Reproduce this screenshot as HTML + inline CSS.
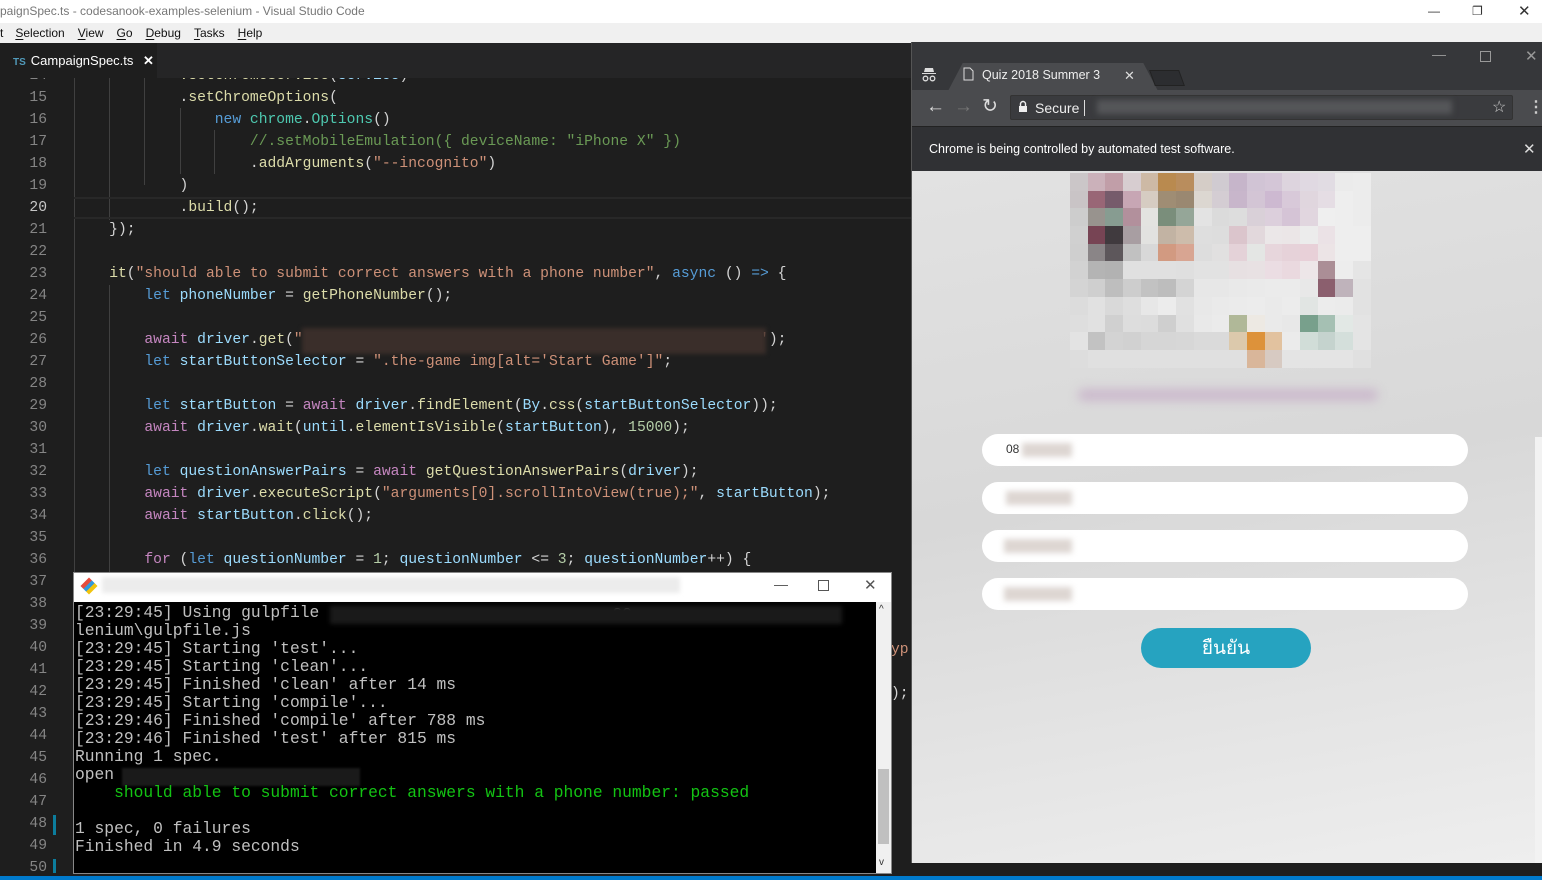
<!DOCTYPE html>
<html><head><meta charset="utf-8"><style>
*{margin:0;padding:0;box-sizing:border-box}
body{width:1542px;height:880px;overflow:hidden;background:#1e1e1e;position:relative;font-family:"Liberation Sans",sans-serif}
.abs{position:absolute}
#title{left:0;top:0;width:1542px;height:23px;background:#fff;color:#777;font-size:12px;line-height:23px;padding-left:0}
#menu{left:0;top:23px;width:1542px;height:20px;background:#f0f0f0;font-size:12px;line-height:20px;color:#111}
#menu span{margin-right:13px}
#menu u{text-decoration-thickness:1px;text-underline-offset:2px}
#tabs{left:0;top:43px;width:912px;height:35px;background:#252526}
#tab{left:0;top:0;width:157px;height:35px;background:#1e1e1e;color:#fff;font-size:13px;line-height:35px;padding-left:13px}
#editor{left:0;top:78px;width:912px;height:795px;overflow:hidden}
.ln{position:absolute;left:0;width:47px;text-align:right;color:#858585;font-family:"Liberation Mono",monospace;font-size:14.67px;height:22px;line-height:22px}
.cl{position:absolute;left:74px;white-space:pre;font-family:"Liberation Mono",monospace;font-size:14.67px;height:22px;line-height:22px;color:#d4d4d4}
.k{color:#569cd6}.v{color:#9cdcfe}.f{color:#dcdcaa}.s{color:#ce9178}.c{color:#6a9955}.p{color:#c586c0}.n{color:#b5cea8}
#term{left:73px;top:572px;width:819px;height:302px;background:#000;border:1px solid #888}
#ttitle{left:0;top:0;width:817px;height:29px;background:#fff}
.tl{position:absolute;left:1px;white-space:pre;font-family:"Liberation Mono",monospace;font-size:16.3px;line-height:18px;height:18px;color:#c0c0c0}
#br{left:911px;top:42px;width:631px;height:821px;background:#dcdcdc;border-left:1px solid #555;overflow:hidden}
.inp{position:absolute;left:70px;width:486px;height:32px;background:#fff;border-radius:16px}
.blur{position:absolute;background:#ddd6d2;filter:blur(3px)}
</style></head><body>
<div id="title" class="abs">paignSpec.ts - codesanook-examples-selenium - Visual Studio Code
<span style="position:absolute;left:1428px;color:#333">&#8212;</span><span style="position:absolute;left:1472px;color:#333">&#10064;</span><span style="position:absolute;left:1518px;color:#333;font-size:15px">&#10005;</span></div>
<div id="menu" class="abs"><span style="margin-right:12px">t</span><span><u>S</u>election</span><span><u>V</u>iew</span><span><u>G</u>o</span><span><u>D</u>ebug</span><span><u>T</u>asks</span><span><u>H</u>elp</span></div>
<div id="tabs" class="abs"><div id="tab" class="abs"><span style="color:#519aba;font-size:10px;font-weight:bold;margin-right:5px">TS</span>CampaignSpec.ts <span style="margin-left:6px;font-weight:bold">✕</span></div></div>
<div id="editor" class="abs"><div class="abs" style="left:0;top:2px;width:912px;height:800px">
<div class="abs" style="left:74px;top:-5px;width:1px;height:800px;background:#404040"></div>
<div class="abs" style="left:109px;top:-5px;width:1px;height:145px;background:#404040"></div>
<div class="abs" style="left:144px;top:-5px;width:1px;height:110px;background:#404040"></div>
<div class="abs" style="left:109px;top:205px;width:1px;height:600px;background:#404040"></div>
<div class="abs" style="left:180px;top:28px;width:1px;height:66px;background:#404040"></div>
<div class="abs" style="left:214px;top:50px;width:1px;height:44px;background:#404040"></div>
<div class="abs" style="left:74px;top:117px;width:838px;height:22px;border-top:2px solid #282828;border-bottom:2px solid #282828"></div>
<div class="ln" style="top:-15px">14</div><div class="cl" style="top:-15px">            <span class="f">.setChromeService</span>(<span class="v">service</span>)</div>
<div class="ln" style="top:7px">15</div><div class="cl" style="top:7px">            .<span class="f">setChromeOptions</span>(</div>
<div class="ln" style="top:29px">16</div><div class="cl" style="top:29px">                <span class="k">new</span> <span style="color:#4ec9b0">chrome</span>.<span style="color:#4ec9b0">Options</span>()</div>
<div class="ln" style="top:51px">17</div><div class="cl" style="top:51px">                    <span class="c">//.setMobileEmulation({ deviceName: "iPhone X" })</span></div>
<div class="ln" style="top:73px">18</div><div class="cl" style="top:73px">                    .<span class="f">addArguments</span>(<span class="s">"--incognito"</span>)</div>
<div class="ln" style="top:95px">19</div><div class="cl" style="top:95px">            )</div>
<div class="ln" style="top:117px;color:#c6c6c6">20</div><div class="cl" style="top:117px">            .<span class="f">build</span>();</div>
<div class="ln" style="top:139px">21</div><div class="cl" style="top:139px">    });</div>
<div class="ln" style="top:161px">22</div>
<div class="ln" style="top:183px">23</div><div class="cl" style="top:183px">    <span class="f">it</span>(<span class="s">"should able to submit correct answers with a phone number"</span>, <span class="k">async</span> () <span class="k">=&gt;</span> {</div>
<div class="ln" style="top:205px">24</div><div class="cl" style="top:205px">        <span class="k">let</span> <span class="v">phoneNumber</span> = <span class="f">getPhoneNumber</span>();</div>
<div class="ln" style="top:227px">25</div>
<div class="ln" style="top:249px">26</div><div class="cl" style="top:249px">        <span class="p">await</span> <span class="v">driver</span>.<span class="f">get</span>(<span class="s">"</span>                                                    <span class="s">'</span>);</div>
<div class="abs" style="left:302px;top:248px;width:464px;height:26px;background:#3a2e2a;filter:blur(2px)"></div>
<div class="ln" style="top:271px">27</div><div class="cl" style="top:271px">        <span class="k">let</span> <span class="v">startButtonSelector</span> = <span class="s">".the-game img[alt='Start Game']"</span>;</div>
<div class="ln" style="top:293px">28</div>
<div class="ln" style="top:315px">29</div><div class="cl" style="top:315px">        <span class="k">let</span> <span class="v">startButton</span> = <span class="p">await</span> <span class="v">driver</span>.<span class="f">findElement</span>(<span class="v">By</span>.<span class="f">css</span>(<span class="v">startButtonSelector</span>));</div>
<div class="ln" style="top:337px">30</div><div class="cl" style="top:337px">        <span class="p">await</span> <span class="v">driver</span>.<span class="f">wait</span>(<span class="v">until</span>.<span class="f">elementIsVisible</span>(<span class="v">startButton</span>), <span class="n">15000</span>);</div>
<div class="ln" style="top:359px">31</div>
<div class="ln" style="top:381px">32</div><div class="cl" style="top:381px">        <span class="k">let</span> <span class="v">questionAnswerPairs</span> = <span class="p">await</span> <span class="f">getQuestionAnswerPairs</span>(<span class="v">driver</span>);</div>
<div class="ln" style="top:403px">33</div><div class="cl" style="top:403px">        <span class="p">await</span> <span class="v">driver</span>.<span class="f">executeScript</span>(<span class="s">"arguments[0].scrollIntoView(true);"</span>, <span class="v">startButton</span>);</div>
<div class="ln" style="top:425px">34</div><div class="cl" style="top:425px">        <span class="p">await</span> <span class="v">startButton</span>.<span class="f">click</span>();</div>
<div class="ln" style="top:447px">35</div>
<div class="ln" style="top:469px">36</div><div class="cl" style="top:469px">        <span class="p">for</span> (<span class="k">let</span> <span class="v">questionNumber</span> = <span class="n">1</span>; <span class="v">questionNumber</span> &lt;= <span class="n">3</span>; <span class="v">questionNumber</span>++) {</div>
<div class="ln" style="top:491px">37</div><div class="ln" style="top:513px">38</div><div class="ln" style="top:535px">39</div><div class="ln" style="top:557px">40</div><div class="ln" style="top:579px">41</div><div class="ln" style="top:601px">42</div><div class="ln" style="top:623px">43</div><div class="ln" style="top:645px">44</div><div class="ln" style="top:667px">45</div><div class="ln" style="top:689px">46</div><div class="ln" style="top:711px">47</div><div class="ln" style="top:733px">48</div><div class="ln" style="top:755px">49</div><div class="ln" style="top:777px">50</div>
<div class="abs" style="left:53px;top:735px;width:3px;height:20px;background:#0c7d9d"></div>
<div class="abs" style="left:53px;top:779px;width:3px;height:20px;background:#0c7d9d"></div>
<div class="cl" style="top:559px;left:891px;color:#ce9178">yp</div>
<div class="cl" style="top:603px;left:891px">);</div>
</div></div>
<div class="abs" style="left:0;top:876px;width:1542px;height:4px;background:#007acc"></div>
<div id="term" class="abs">
<div id="ttitle" class="abs">
<div class="abs" style="left:9px;top:7px;width:12px;height:12px;transform:rotate(45deg);background:linear-gradient(90deg,#e74c3c 33%,#3498db 33% 66%,#f1c40f 66%)"></div>
<div class="abs" style="left:28px;top:4px;width:578px;height:16px;background:#ececec;filter:blur(2px)"></div>
<div class="abs" style="left:700px;top:3px;color:#555;font-size:14px">&#8212;</div>
<div class="abs" style="left:744px;top:7px;width:11px;height:11px;border:1px solid #555"></div>
<div class="abs" style="left:790px;top:3px;color:#555;font-size:15px">✕</div>
</div>
<div class="abs" style="left:0;top:31px;width:803px;height:269px">
<div class="tl" style="top:0">[23:29:45] Using gulpfile                             -se</div>
<div class="abs" style="left:256px;top:2px;width:512px;height:18px;background:#1a1a1a;filter:blur(2px)"></div>
<div class="tl" style="top:18px">lenium\gulpfile.js</div>
<div class="tl" style="top:36px">[23:29:45] Starting 'test'...</div>
<div class="tl" style="top:54px">[23:29:45] Starting 'clean'...</div>
<div class="tl" style="top:72px">[23:29:45] Finished 'clean' after 14 ms</div>
<div class="tl" style="top:90px">[23:29:45] Starting 'compile'...</div>
<div class="tl" style="top:108px">[23:29:46] Finished 'compile' after 788 ms</div>
<div class="tl" style="top:126px">[23:29:46] Finished 'test' after 815 ms</div>
<div class="tl" style="top:144px">Running 1 spec.</div>
<div class="tl" style="top:162px">open</div>
<div class="abs" style="left:48px;top:164px;width:238px;height:18px;background:#1a1a1a;filter:blur(1px)"></div>
<div class="tl" style="top:180px;color:#13c313">    should able to submit correct answers with a phone number: passed</div>
<div class="tl" style="top:216px">1 spec, 0 failures</div>
<div class="tl" style="top:234px">Finished in 4.9 seconds</div>
</div>
<div class="abs" style="left:802px;top:29px;width:15px;height:271px;background:#f0f0f0"><div class="abs" style="left:2px;top:167px;width:11px;height:75px;background:#c0c0c0"></div><div class="abs" style="left:3px;top:2px;font-size:10px;color:#333">^</div><div class="abs" style="left:3px;top:255px;font-size:10px;color:#333">v</div></div>
</div>
<div id="br" class="abs">
<div class="abs" style="left:0;top:0;width:631px;height:48px;background:#36373a"></div>
<div class="abs" style="left:520px;top:4px;color:#999;font-size:14px">&#8212;</div>
<div class="abs" style="left:568px;top:9px;width:11px;height:11px;border:1px solid #999"></div>
<div class="abs" style="left:613px;top:5px;color:#999;font-size:15px">✕</div>
<svg class="abs" style="left:9px;top:25px" width="16" height="16" viewBox="0 0 16 16"><path d="M4 1h8l1 4H3z M1 6h14v1H1z" fill="#ddd"/><circle cx="4.5" cy="11.5" r="2.3" fill="none" stroke="#ddd" stroke-width="1.3"/><circle cx="11.5" cy="11.5" r="2.3" fill="none" stroke="#ddd" stroke-width="1.3"/></svg>
<div class="abs" style="left:36px;top:21px;width:210px;height:28px;background:#4a4b4e;clip-path:polygon(7% 0,93% 0,100% 100%,0 100%)"></div>
<svg class="abs" style="left:51px;top:25px" width="11" height="14" viewBox="0 0 11 14"><path d="M1 1h6l3 3v9H1z" fill="none" stroke="#ddd"/></svg>
<div class="abs" style="left:70px;top:26px;color:#eee;font-size:12.5px">Quiz 2018 Summer 3</div>
<div class="abs" style="left:212px;top:26px;color:#ddd;font-size:13px">✕</div>
<div class="abs" style="left:240px;top:28px;width:30px;height:16px;background:#2c2d30;transform:skewX(20deg);border:1px solid #222"></div>
<div class="abs" style="left:0;top:48px;width:631px;height:36px;background:#4a4b4e"></div>
<div class="abs" style="left:14px;top:54px;color:#ddd;font-size:19px">&#8592;</div>
<div class="abs" style="left:42px;top:54px;color:#777;font-size:19px">&#8594;</div>
<div class="abs" style="left:70px;top:53px;color:#ddd;font-size:19px">&#8635;</div>
<div class="abs" style="left:98px;top:53px;width:503px;height:25px;background:#3a3b3e;border:1px solid #333;border-radius:2px"></div>
<svg class="abs" style="left:106px;top:58px" width="10" height="13" viewBox="0 0 10 13"><path d="M2.5 6V4a2.5 2.5 0 0 1 5 0v2" fill="none" stroke="#eee" stroke-width="1.4"/><rect x="1" y="6" width="8" height="6" fill="#eee"/></svg>
<div class="abs" style="left:123px;top:58px;color:#eee;font-size:14px">Secure</div>
<div class="abs" style="left:172px;top:58px;width:1px;height:16px;background:#ddd"></div>
<div class="abs" style="left:185px;top:58px;width:355px;height:14px;background:#555659;filter:blur(3px)"></div>
<div class="abs" style="left:580px;top:55px;color:#ccc;font-size:16px">☆</div>
<div class="abs" style="left:616px;top:55px;color:#ccc;font-size:16px;font-weight:bold">⋮</div>
<div class="abs" style="left:0;top:84px;width:631px;height:45px;background:#303134;border-top:1px solid #222"></div>
<div class="abs" style="left:17px;top:100px;color:#fff;font-size:12.5px">Chrome is being controlled by automated test software.</div>
<div class="abs" style="left:611px;top:98px;color:#ddd;font-size:15px">✕</div>
<div class="abs" style="left:0;top:129px;width:631px;height:692px;background:linear-gradient(170deg,#e2e2e2,#d8d8d8 45%,#e6e6e6 80%,#eeeeee)"></div>
<div class="abs" style="left:623px;top:395px;width:8px;height:426px;background:#f2f2f2"></div>
<div class="abs" style="left:158px;top:131px;width:300px;height:195px;display:grid;grid-template-columns:repeat(17,17.7px);grid-auto-rows:17.7px">
<div style="background:#cbc6c8"></div><div style="background:#cbb1ba"></div><div style="background:#c19ea8"></div><div style="background:#d7cdd0"></div><div style="background:#cdb9a5"></div><div style="background:#b98a4f"></div><div style="background:#b98d5d"></div><div style="background:#d5cdc7"></div><div style="background:#d0cbd1"></div><div style="background:#c6b5ca"></div><div style="background:#d1c4d5"></div><div style="background:#d4c6d7"></div><div style="background:#ddd4de"></div><div style="background:#e0d9e2"></div><div style="background:#e1dce3"></div><div style="background:#ebebeb"></div><div style="background:#ececec"></div>
<div style="background:#c9c4c6"></div><div style="background:#996676"></div><div style="background:#765b6b"></div><div style="background:#c7a6b4"></div><div style="background:#d6ccc2"></div><div style="background:#9f8d74"></div><div style="background:#9a8871"></div><div style="background:#dcd7d1"></div><div style="background:#d4cdd3"></div><div style="background:#c8b6cb"></div><div style="background:#d3c5d5"></div><div style="background:#cdb9d1"></div><div style="background:#d8c9d9"></div><div style="background:#e0d6de"></div><div style="background:#e5dde4"></div><div style="background:#eeeeee"></div><div style="background:#ececec"></div>
<div style="background:#cdcdcd"></div><div style="background:#98938e"></div><div style="background:#879c91"></div><div style="background:#b2909c"></div><div style="background:#e3e3e0"></div><div style="background:#7a8e7b"></div><div style="background:#95a698"></div><div style="background:#e3e3e3"></div><div style="background:#dbdbdb"></div><div style="background:#dddddd"></div><div style="background:#d9d0d8"></div><div style="background:#dccfdc"></div><div style="background:#d5c4d6"></div><div style="background:#e1d6df"></div><div style="background:#efefef"></div><div style="background:#eeeeee"></div><div style="background:#ececec"></div>
<div style="background:#d0d0d0"></div><div style="background:#774454"></div><div style="background:#403a3e"></div><div style="background:#a89ea2"></div><div style="background:#e2e2e0"></div><div style="background:#c2b3a3"></div><div style="background:#cdbcab"></div><div style="background:#dedede"></div><div style="background:#dddddd"></div><div style="background:#dbc5cc"></div><div style="background:#e2d8dc"></div><div style="background:#ebe7e8"></div><div style="background:#ebe6e7"></div><div style="background:#ececec"></div><div style="background:#ebe2e6"></div><div style="background:#eeeeee"></div><div style="background:#eeeeee"></div>
<div style="background:#cfcfcf"></div><div style="background:#8a8587"></div><div style="background:#5d575b"></div><div style="background:#c1c1c1"></div><div style="background:#d8d8d8"></div><div style="background:#d29a81"></div><div style="background:#d8a592"></div><div style="background:#dddddd"></div><div style="background:#e1e0e0"></div><div style="background:#e4d2d8"></div><div style="background:#e4e6e4"></div><div style="background:#e7d6dc"></div><div style="background:#e6d2d9"></div><div style="background:#e8d0d8"></div><div style="background:#ece4e6"></div><div style="background:#eeeeee"></div><div style="background:#eeeeee"></div>
<div style="background:#d2d2d2"></div><div style="background:#b4b4b4"></div><div style="background:#b2b2b2"></div><div style="background:#e0e0e0"></div><div style="background:#e0e0e0"></div><div style="background:#e0e0e0"></div><div style="background:#dfdfdf"></div><div style="background:#e2e2e2"></div><div style="background:#e2e2e2"></div><div style="background:#e7e0e2"></div><div style="background:#e8e1e3"></div><div style="background:#ebdde3"></div><div style="background:#ead9df"></div><div style="background:#ede6e8"></div><div style="background:#ab8e96"></div><div style="background:#ededed"></div><div style="background:#e5e5e5"></div>
<div style="background:#d4d4d4"></div><div style="background:#cfcfcf"></div><div style="background:#bebebe"></div><div style="background:#cdcdcd"></div><div style="background:#c2c2c2"></div><div style="background:#bdbdbd"></div><div style="background:#d4d4d4"></div><div style="background:#e7e7e7"></div><div style="background:#e7e7e7"></div><div style="background:#e9e9e9"></div><div style="background:#eaeaea"></div><div style="background:#ebebeb"></div><div style="background:#ebebeb"></div><div style="background:#e8e8e8"></div><div style="background:#8b5f6e"></div><div style="background:#bfb3bb"></div><div style="background:#e2e2e2"></div>
<div style="background:#dcdcdc"></div><div style="background:#e1e1e1"></div><div style="background:#d9d9d9"></div><div style="background:#dedede"></div><div style="background:#e7e7e7"></div><div style="background:#ececec"></div><div style="background:#e1e1e1"></div><div style="background:#e8e8e8"></div><div style="background:#eaeaea"></div><div style="background:#ebebeb"></div><div style="background:#ececec"></div><div style="background:#eaeaea"></div><div style="background:#ececec"></div><div style="background:#e1e5e3"></div><div style="background:#ececec"></div><div style="background:#ebebeb"></div><div style="background:#e2e2e2"></div>
<div style="background:#dedede"></div><div style="background:#e1e1e1"></div><div style="background:#d0d0d0"></div><div style="background:#dddddd"></div><div style="background:#dcdcdc"></div><div style="background:#cfcfcf"></div><div style="background:#e0e0e0"></div><div style="background:#e9e9e9"></div><div style="background:#ebebeb"></div><div style="background:#b0b898"></div><div style="background:#ede9e3"></div><div style="background:#eaeaea"></div><div style="background:#e8e8e8"></div><div style="background:#78a08c"></div><div style="background:#a5c0b3"></div><div style="background:#e2e8e5"></div><div style="background:#e4e4e4"></div>
<div style="background:#e3e3e3"></div><div style="background:#c2c2c2"></div><div style="background:#d3d3d3"></div><div style="background:#d1d1d1"></div><div style="background:#d6d6d6"></div><div style="background:#d6d6d6"></div><div style="background:#d7d7d7"></div><div style="background:#dadada"></div><div style="background:#dadada"></div><div style="background:#dcc9ac"></div><div style="background:#dd923a"></div><div style="background:#e2c29f"></div><div style="background:#ebebeb"></div><div style="background:#d1ddd8"></div><div style="background:#c5d3ce"></div><div style="background:#d4dfdb"></div><div style="background:#e4e4e4"></div>
<div style="background:#dddddd"></div><div style="background:#e0e0e0"></div><div style="background:#e0e0e0"></div><div style="background:#e0e0e0"></div><div style="background:#e0e0e0"></div><div style="background:#e0e0e0"></div><div style="background:#e0e0e0"></div><div style="background:#e0e0e0"></div><div style="background:#e0e0e0"></div><div style="background:#e0e0e0"></div><div style="background:#d9b69a"></div><div style="background:#d7cac2"></div><div style="background:#e4e4e4"></div><div style="background:#e4e4e4"></div><div style="background:#e4e4e4"></div><div style="background:#e4e4e4"></div><div style="background:#e0e0e0"></div>
</div>
<div class="abs" style="left:166px;top:347px;width:300px;height:12px;background:#cbb9cc;filter:blur(5px);border-radius:6px"></div>
<div class="inp" style="top:392px"><span style="position:absolute;left:24px;top:8px;font-size:12px;color:#333">08</span><div class="blur" style="left:40px;top:9px;width:50px;height:14px"></div></div>
<div class="inp" style="top:440px"><div class="blur" style="left:24px;top:9px;width:66px;height:14px"></div></div>
<div class="inp" style="top:488px"><div class="blur" style="left:22px;top:9px;width:68px;height:14px"></div></div>
<div class="inp" style="top:536px"><div class="blur" style="left:22px;top:9px;width:68px;height:14px"></div></div>
<div class="abs" style="left:229px;top:586px;width:170px;height:40px;background:#26a3c0;border-radius:20px;color:#fff;font-size:19px;text-align:center;line-height:42px;font-family:'Liberation Sans','Noto Sans CJK SC',sans-serif">ยืนยัน</div>
</div>
</body></html>
